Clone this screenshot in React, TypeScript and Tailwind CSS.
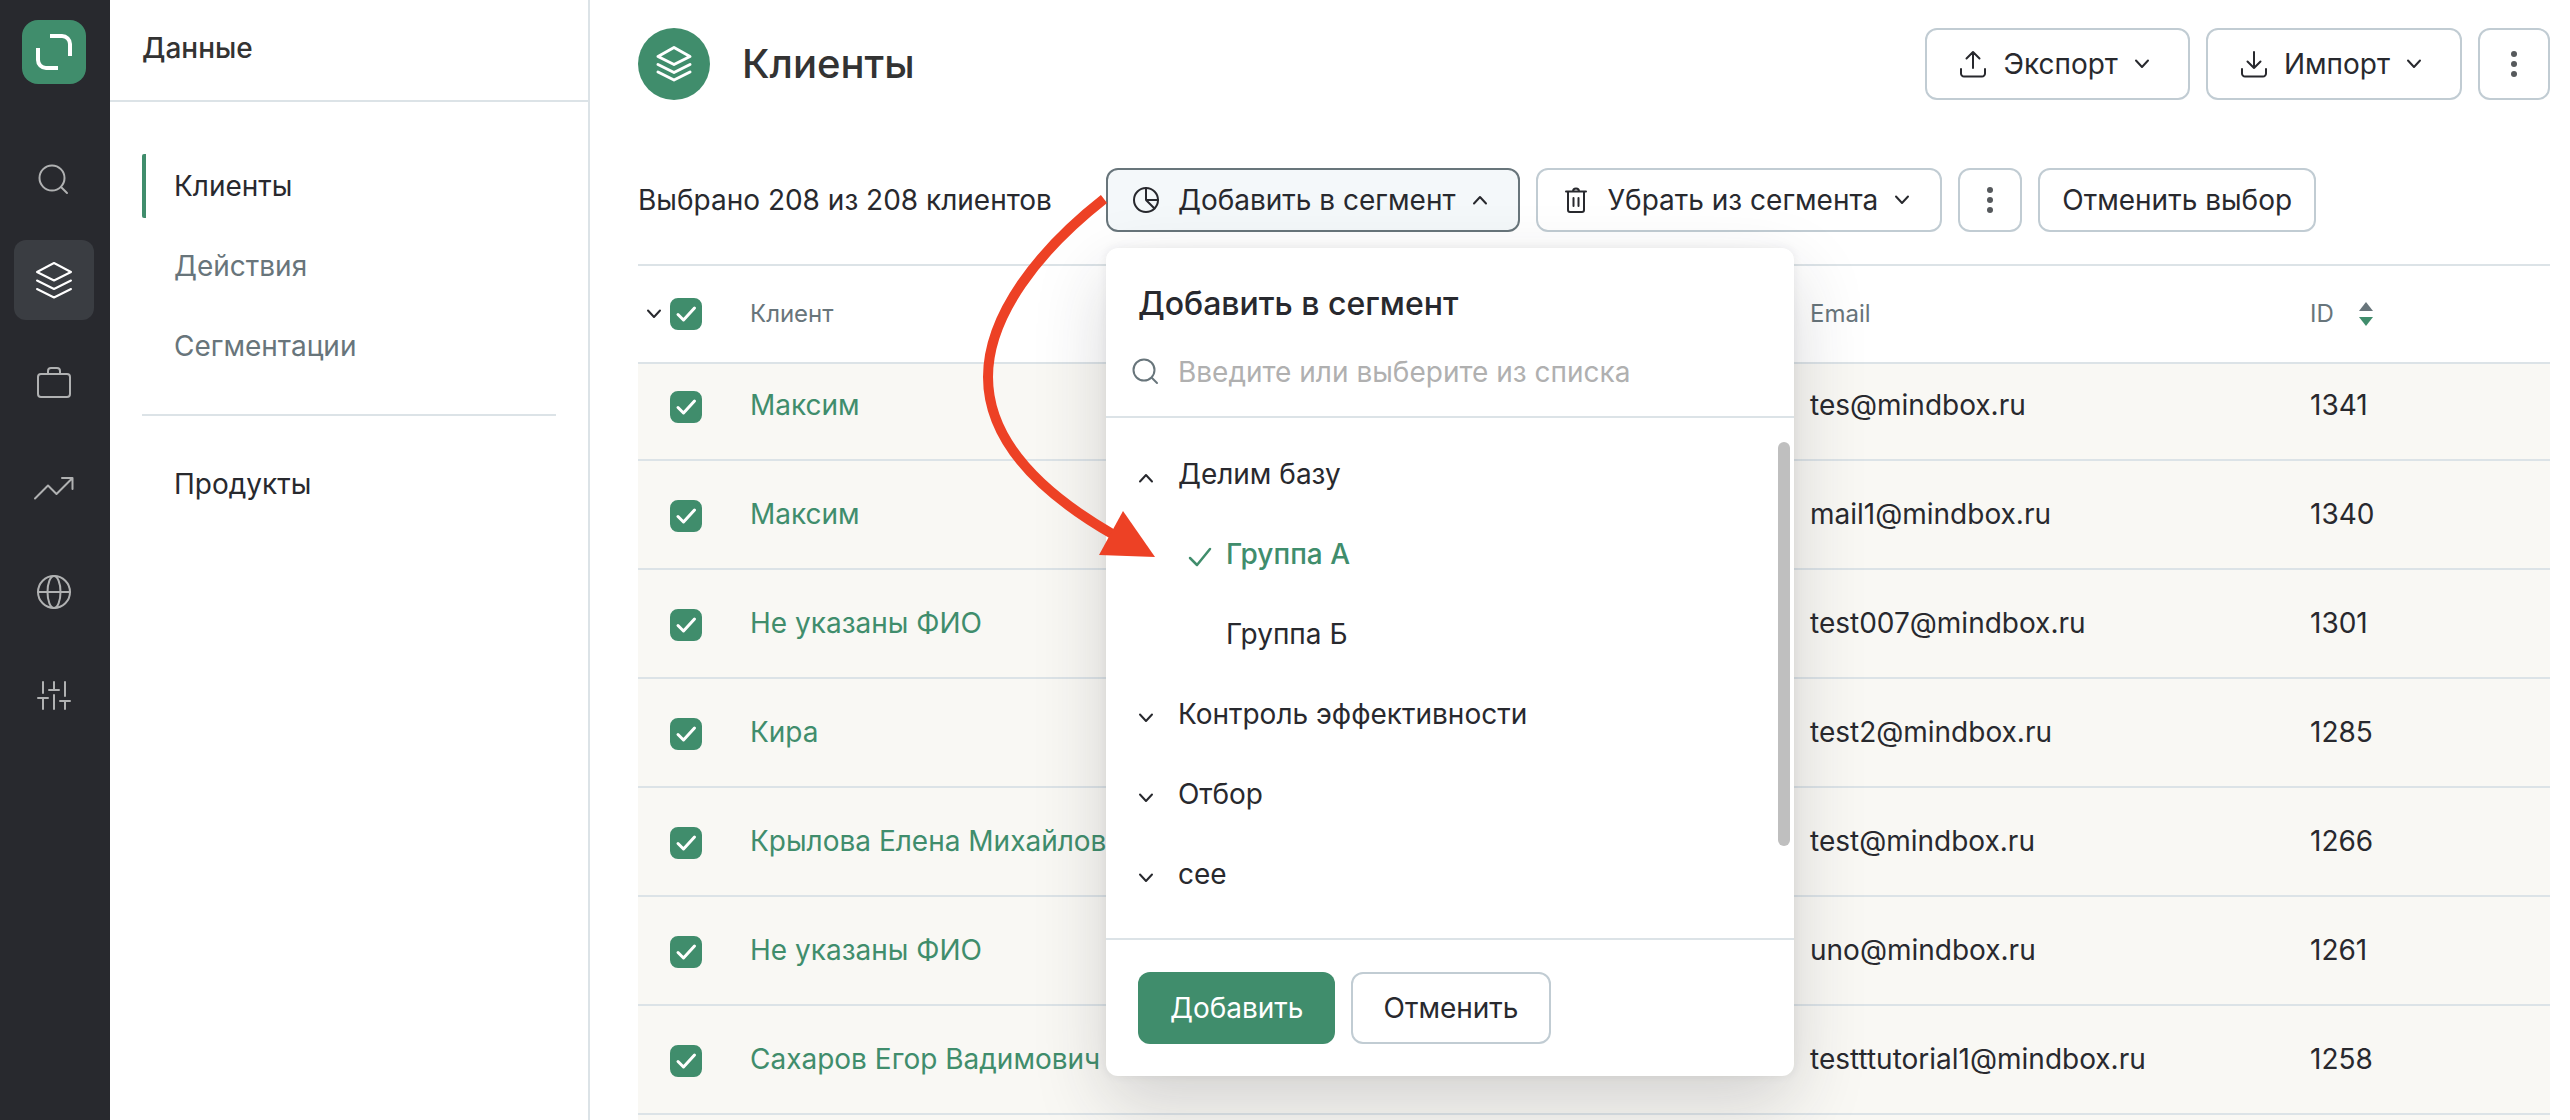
import type { ReactNode } from "react";

const customers = [
  { name: "Максим", email: "tes@mindbox.ru", id: 1341 },
  { name: "Максим", email: "mail1@mindbox.ru", id: 1340 },
  { name: "Не указаны ФИО", email: "test007@mindbox.ru", id: 1301 },
  { name: "Кира", email: "test2@mindbox.ru", id: 1285 },
  { name: "Крылова Елена Михайлов", email: "test@mindbox.ru", id: 1266 },
  { name: "Не указаны ФИО", email: "uno@mindbox.ru", id: 1261 },
  { name: "Сахаров Егор Вадимович", email: "testttutorial1@mindbox.ru", id: 1258 },
];

function Icon({ size = 40, className = "", children }: { size?: number; className?: string; children: ReactNode }) {
  return (
    <svg
      width={size}
      height={size}
      viewBox={`0 0 ${size} ${size}`}
      fill="none"
      stroke="currentColor"
      strokeWidth={2}
      strokeLinecap="round"
      strokeLinejoin="round"
      aria-hidden="true"
      className={`shrink-0 overflow-visible ${className}`}
    >
      {children}
    </svg>
  );
}

function Layers() {
  return <path d="M20 3l17 9-17 8.500L3 12zM3 20.500l17 8.500 17-8.500M3 29l17 8.500L37 29" />;
}

function Chevron({ up = false }: { up?: boolean }) {
  return (
    <Icon size={20}>
      <path d={up ? "M4 13.500l6-6.500 6 6.500" : "M4 6.500l6 6.500 6-6.500"} />
    </Icon>
  );
}

function Dots() {
  return (
    <svg width="8" height="28" viewBox="0 0 8 28" fill="#56595c" aria-hidden="true">
      <circle cx="4" cy="4" r="3" />
      <circle cx="4" cy="14" r="3" />
      <circle cx="4" cy="24" r="3" />
    </svg>
  );
}

function Checkbox({ label }: { label: string }) {
  return (
    <span className="relative block size-8">
      <input
        type="checkbox"
        defaultChecked
        aria-label={label}
        className="block size-8 appearance-none rounded-lg border-2 border-[#c1ccd3] bg-white checked:border-[#408d6c] checked:bg-[#408d6c]"
      />
      <svg viewBox="0 0 32 32" fill="none" stroke="#fff" strokeWidth="3" strokeLinecap="round" strokeLinejoin="round" className="pointer-events-none absolute inset-0">
        <path d="M8 16.500l5.500 5.500L24.500 10" />
      </svg>
    </span>
  );
}

function RailItem({ label, active = false, children }: { label: string; active?: boolean; children: ReactNode }) {
  return (
    <a
      href="#"
      aria-label={label}
      className={`flex size-20 items-center justify-center rounded-xl ${active ? "bg-[#3a3d42] text-white" : "text-[#b0b1b2]"}`}
    >
      <Icon>{children}</Icon>
    </a>
  );
}

function Rail() {
  return (
    <nav aria-label="Разделы" className="flex w-[110px] shrink-0 flex-col items-center bg-[#28292e] pt-5">
      <a href="#" aria-label="Mindbox" className="mb-[52px] mr-0.5">
        <svg width="64" height="64" viewBox="0 0 64 64" fill="none" aria-hidden="true">
          <rect width="64" height="64" rx="16" fill="#408d6c" />
          <path d="M28 16h12a8 8 0 0 1 8 8v12M16 28v12a8 8 0 0 0 8 8h12" stroke="#fff" strokeWidth="4" />
        </svg>
      </a>
      <div className="mr-0.5 flex flex-col gap-6">
        <RailItem label="Поиск">
          <circle cx="18" cy="22" r="12.500" />
          <path d="M27 31l6 6" />
        </RailItem>
        <RailItem label="Данные" active>
          <Layers />
        </RailItem>
        <RailItem label="Кампании">
          <rect x="4" y="10" width="32" height="23" rx="3" />
          <path d="M14 10V7a3 3 0 0 1 3-3h6a3 3 0 0 1 3 3v3" />
        </RailItem>
        <RailItem label="Отчёты">
          <path d="M1 30.500l13-13 8.500 8.500L38.500 10M28 10h10.500v11" />
        </RailItem>
        <RailItem label="Сайты">
          <circle cx="20" cy="20" r="16" />
          <ellipse cx="20" cy="20" rx="6.500" ry="16" />
          <path d="M4 20h32" />
        </RailItem>
        <RailItem label="Настройки">
          <path d="M9 6v11M4 22h10M9 22v11M20 6v8M15 14h10M20 19v14M31 6v14M26 25h10M31 25v8" />
        </RailItem>
      </div>
    </nav>
  );
}

function Sidebar() {
  return (
    <aside className="flex w-[480px] shrink-0 flex-col border-r-2 border-[#dce3e7]">
      <h2 className="border-b-2 border-[#dce3e7] px-8 pt-7 pb-8 text-[28px] leading-10 font-medium text-[#333333]">Данные</h2>
      <nav aria-label="Данные" className="flex flex-col px-8 text-[28px] leading-10">
        <a href="#" className="mt-[52px] rounded-xs border-l-4 border-[#408d6c] py-3 pl-7 text-[#28292e]">
          Клиенты
        </a>
        <a href="#" className="mt-4 py-3 pl-8 text-[#68757b]">
          Действия
        </a>
        <a href="#" className="mt-4 py-3 pl-8 text-[#68757b]">
          Сегментации
        </a>
        <hr className="mt-9 border-t-2 border-[#dce3e7]" />
        <a href="#" className="mt-9 py-3 pl-8 text-[#28292e]">
          Продукты
        </a>
      </nav>
    </aside>
  );
}

function ListGroup({ label, open = false }: { label: string; open?: boolean }) {
  return (
    <button type="button" aria-expanded={open} className="flex h-20 w-full items-center gap-[22px] pl-[30px] text-left">
      <span className="pt-2">
        <Chevron up={open} />
      </span>
      {label}
    </button>
  );
}

function SegmentPopup() {
  return (
    <div
      role="dialog"
      aria-labelledby="segment-title"
      className="absolute top-20 left-0 z-10 w-[688px] rounded-xl bg-white shadow-[0_28px_72px_rgba(38,40,48,0.18),0_0_10px_rgba(38,40,48,0.08)]"
    >
      <div className="border-b-2 border-[#dce3e7] pt-8 pb-6">
        <h3 id="segment-title" className="px-8 text-[32px] leading-[48px] font-medium">
          Добавить в сегмент
        </h3>
        <label className="mt-6 flex items-center gap-[18px] pr-8 pl-[26px]">
          <Icon size={28} className="text-[#68757b]">
            <circle cx="12" cy="12" r="10.500" />
            <path d="M20 20l5 5" />
          </Icon>
          <input
            type="text"
            aria-label="Поиск сегмента"
            placeholder="Введите или выберите из списка"
            className="h-10 w-full outline-none placeholder:text-[#b0b0b0]"
          />
        </label>
      </div>
      <div className="flex justify-between">
        <div className="flex-1 pt-4 pb-6">
          <ListGroup label="Делим базу" open />
          <button type="button" className="flex h-20 w-full items-center gap-3 pl-20 text-left font-medium text-[#408d6c]">
            <Icon size={28} className="mt-1">
              <path d="M4 16l7 7L24 7" strokeWidth="2.500" />
            </Icon>
            Группа A
          </button>
          <button type="button" className="flex h-20 w-full items-center pl-[120px] text-left">
            Группа Б
          </button>
          <ListGroup label="Контроль эффективности" />
          <ListGroup label="Отбор" />
          <ListGroup label="сее" />
        </div>
        <div className="mt-6 mr-1 h-[404px] w-3 rounded-full bg-[#bfbfbf]" />
      </div>
      <div className="flex gap-4 border-t-2 border-[#dce3e7] p-8">
        <button type="button" className="h-[72px] rounded-xl bg-[#408d6c] px-8 text-white">
          Добавить
        </button>
        <button type="button" className="h-[72px] rounded-xl border-2 border-[#c1ccd3] px-[30px]">
          Отменить
        </button>
      </div>
    </div>
  );
}

// Red pointer from the toolbar button to the selected segment
function Pointer() {
  return (
    <svg
      width="180"
      height="380"
      viewBox="0 0 180 380"
      fill="none"
      aria-hidden="true"
      className="pointer-events-none absolute top-[22px] left-[-127px] z-20"
    >
      <path d="M125 9C60 60 9 125 9 187c0 63 51 115 126 158" stroke="#ed4125" strokeWidth="10" />
      <path d="M144 321l32 46-56-2z" fill="#ed4125" />
    </svg>
  );
}

export default function App() {
  return (
    <div className="flex h-screen overflow-hidden bg-white font-['Inter','Liberation_Sans',sans-serif] text-[28px] leading-10 text-[#28292e]">
      <Rail />
      <Sidebar />
      <main className="flex min-w-0 flex-1 flex-col pt-7 pr-5 pl-12">
        <header className="flex items-center gap-4">
          <span className="mr-4 flex size-[72px] items-center justify-center rounded-full bg-[#408d6c] text-white">
            <Icon>
              <path d="M20 3.500l16 9-16 8-16-8zM4 20.500l16 8 16-8M4 28l16 8 16-8" strokeWidth="3" />
            </Icon>
          </span>
          <h1 className="mr-auto text-[40px] leading-[48px] font-medium text-[#333333]">Клиенты</h1>
          <button type="button" className="flex h-[72px] items-center rounded-xl border-2 border-[#c1ccd3] pr-9 pl-8">
            <Icon size={28} className="mr-4">
              <path d="M14 2v16M7.500 8.500L14 2l6.500 6.500M2 19v4.500a3 3 0 0 0 3 3h18a3 3 0 0 0 3-3V19" />
            </Icon>
            <span className="mr-3.5">Экспорт</span>
            <Chevron />
          </button>
          <button type="button" className="flex h-[72px] items-center rounded-xl border-2 border-[#c1ccd3] pr-9 pl-8">
            <Icon size={28} className="mr-4">
              <path d="M14 2v16M7.500 11.500L14 18l6.500-6.500M2 19v4.500a3 3 0 0 0 3 3h18a3 3 0 0 0 3-3V19" />
            </Icon>
            <span className="mr-3.5">Импорт</span>
            <Chevron />
          </button>
          <button type="button" aria-label="Ещё" className="flex size-[72px] items-center justify-center rounded-xl border-2 border-[#c1ccd3]">
            <Dots />
          </button>
        </header>

        <div className="mt-[68px] flex items-center gap-4">
          <p className="mr-[38px] whitespace-nowrap">Выбрано 208 из 208 клиентов</p>
          <div className="relative">
            <button type="button" aria-expanded="true" className="flex h-16 items-center rounded-xl border-2 border-[#68757b] bg-[#f4f8fa] pr-7 pl-6 whitespace-nowrap">
              <Icon size={28} className="mr-[18px]">
                <circle cx="14" cy="14" r="12" />
                <path d="M14 2v12h12M14 14l8.500 8.500" />
              </Icon>
              <span className="mr-3.5">Добавить в сегмент</span>
              <Chevron up />
            </button>
            <SegmentPopup />
            <Pointer />
          </div>
          <button type="button" className="flex h-16 items-center rounded-xl border-2 border-[#c1ccd3] pr-7 pl-6 whitespace-nowrap">
            <Icon size={28} className="mr-[18px]">
              <path d="M4 5.500h20M6 5.500V24a2 2 0 0 0 2 2h12a2 2 0 0 0 2-2V5.500M11 5.500a3 3 0 0 1 6 0M11.500 12v8M16.500 12v8" />
            </Icon>
            <span className="mr-3.5">Убрать из сегмента</span>
            <Chevron />
          </button>
          <button type="button" aria-label="Ещё действия" className="flex size-16 items-center justify-center rounded-xl border-2 border-[#c1ccd3]">
            <Dots />
          </button>
          <button type="button" className="h-16 rounded-xl border-2 border-[#c1ccd3] px-[22px] whitespace-nowrap">
            Отменить выбор
          </button>
        </div>

        <div className="mt-8 flex-1 bg-[#f9f8f4]">
          <table className="w-full table-fixed border-collapse text-left">
            <thead className="bg-white text-[24px] text-[#68757b]">
              <tr className="h-[98px] border-y-2 border-[#dce3e7]">
                <th className="w-28 font-normal">
                  <div className="flex items-center gap-1.5 pl-1.5 text-[#28292e]">
                    <Chevron />
                    <Checkbox label="Выбрать всех" />
                  </div>
                </th>
                <th className="font-normal">Клиент</th>
                <th className="w-[500px] font-normal">Email</th>
                <th className="w-60 font-normal">
                  <button type="button" className="flex items-center gap-6">
                    ID
                    <svg width="16" height="28" viewBox="0 0 16 28" aria-hidden="true">
                      <path d="M8 2l7 9H1z" fill="#68757b" />
                      <path d="M8 26l7-9H1z" fill="#408d6c" />
                    </svg>
                  </button>
                </th>
              </tr>
            </thead>
            <tbody>
              {customers.map((c) => (
                <tr key={c.id} className="h-[109px] border-b-2 border-[#dce3e7] align-bottom first:h-[97px]">
                  <td className="pb-9 pl-8">
                    <Checkbox label={c.name} />
                  </td>
                  <td className="pb-[34px]">
                    <a href="#" className="text-[#408d6c]">
                      {c.name}
                    </a>
                  </td>
                  <td className="pb-[34px]">{c.email}</td>
                  <td className="pb-[34px]">{c.id}</td>
                </tr>
              ))}
            </tbody>
          </table>
        </div>
      </main>
    </div>
  );
}
